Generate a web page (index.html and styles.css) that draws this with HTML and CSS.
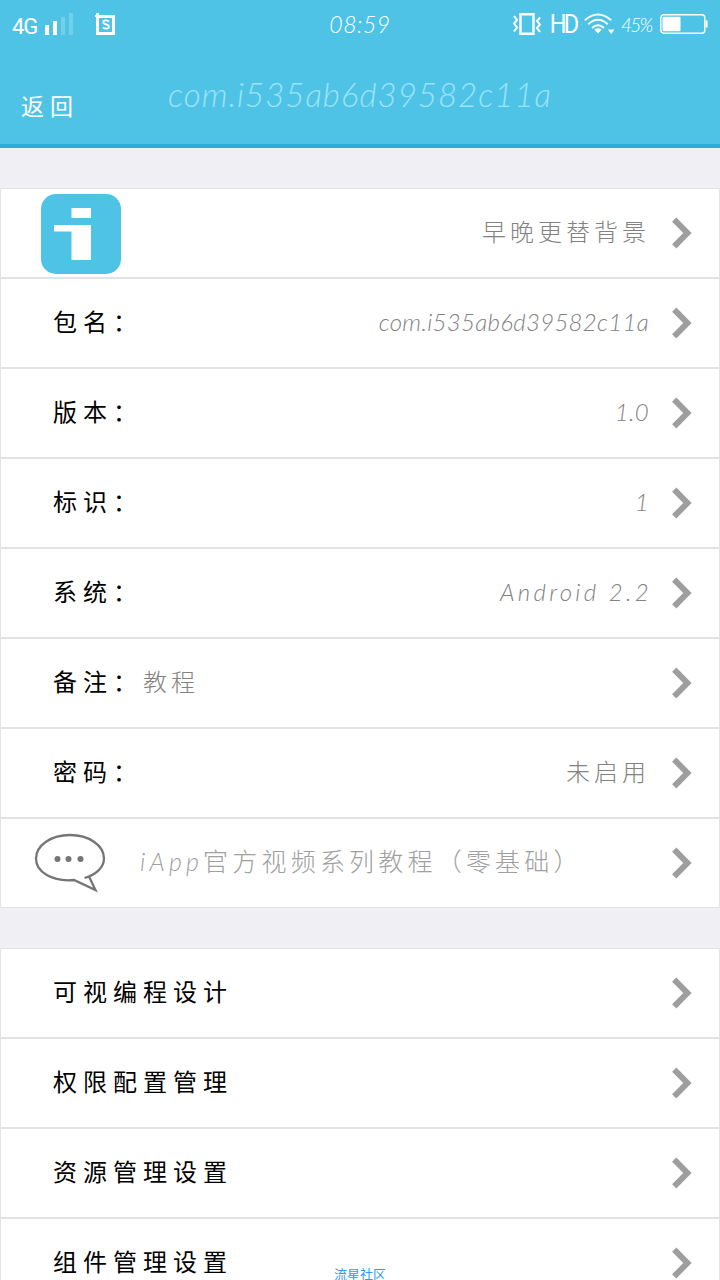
FILE: index.html
```html
<!DOCTYPE html>
<html lang="zh-CN">
<head>
    <meta charset="UTF-8">
    <meta name="viewport" content="width=device-width, initial-scale=1.0">
    <title>早晚更替背景</title>
    <link rel="stylesheet" href="styles.css">
</head>
<body>

    <!-- Shared icons -->
    <svg class="sprite" width="0" height="0">
        <symbol id="arrow" viewBox="0 0 22 34">
            <path d="M3.2 3.6 L16.4 17 L3.2 30.4" fill="none" stroke="#9e9e9e" stroke-width="6"/>
        </symbol>
    </svg>

    <header>
        <div class="status-bar">
            <div class="status-left">
                <span class="network">4G</span>
                <svg class="signal" width="28" height="22" viewBox="0 0 28 22">
                    <path d="M0 12h4v10h-4z M8 8h4v14h-4z" fill="#fff"/>
                    <path d="M16 4h4v18h-4z M24 0h4v22h-4z" fill="#72d0eb"/>
                </svg>
                <svg class="app-badge" width="20" height="22" viewBox="0 0 20 22">
                    <path d="M2.5 3.5h16v17h-16z" fill="none" stroke="#fff" stroke-width="3"/>
                    <path d="M0 2h1v-2h3v4h-4z" fill="#fff"/>
                    <path d="M13.9 8.6C12.5 6.8 8.3 7 8.3 9.2C8.3 12 13.9 10.9 13.9 13.8C13.9 16.2 9.1 16.2 7.9 14.3" fill="none" stroke="#fff" stroke-width="1.8"/>
                </svg>
            </div>
            <span class="clock">08:59</span>
            <div class="status-right">
                <svg class="vibrate" width="28" height="22" viewBox="0 0 28 22">
                    <path d="M7.5 1.2h13v19.6h-13z" fill="none" stroke="#fff" stroke-width="2.4"/>
                    <path d="M1 3l3 4l-3 3.5l3 4l-3 4 M27 4.5l-3 3.5l3 3.5l-3 3.5l3 4" fill="none" stroke="#fff" stroke-width="2"/>
                </svg>
                <span class="hd">HD</span>
                <svg class="wifi" width="31" height="22" viewBox="0 0 31 22">
                    <path d="M0.8 7.3Q14 -4.2 27.2 7.3 M4.3 11.2Q14 2.4 23.7 11.2 M8 15Q14 9.6 20 15" fill="none" stroke="#fff" stroke-width="2"/>
                    <path d="M10.3 16.6Q14 13.8 17.7 16.6L14 20.4z M24 16.5h6.4l-3.2 4.8z" fill="#fff"/>
                </svg>
                <span class="percent">45%</span>
                <svg class="battery" width="48" height="20" viewBox="0 0 48 20">
                    <rect x="0.8" y="0.8" width="44" height="18.4" rx="3" fill="none" stroke="#fff" stroke-width="1.4"/>
                    <rect x="2.5" y="2.8" width="18" height="14.4" rx="1" fill="#fff"/>
                    <path d="M45.4 6.5h2.2v7h-2.2z" fill="#fff"/>
                </svg>
            </div>
        </div>
        <div class="title-bar">
            <a class="back" href="#">返回</a>
            <h1>com.i535ab6d39582c11a</h1>
        </div>
    </header>

    <main>
        <!-- App info -->
        <ul class="list">
            <li>
                <svg class="app-icon" width="80" height="80" viewBox="0 0 80 80">
                    <rect width="80" height="80" rx="15" fill="#4fc3e6"/>
                    <path d="M30.5 14H50v10H30.5z M13 31H50v35H30.5V37.5H13z" fill="#fff"/>
                </svg>
                <span class="value">早晚更替背景</span>
                <svg class="arrow"><use href="#arrow"/></svg>
            </li>
            <li>
                <span class="label">包名：</span>
                <span class="value package">com.i535ab6d39582c11a</span>
                <svg class="arrow"><use href="#arrow"/></svg>
            </li>
            <li>
                <span class="label">版本：</span>
                <span class="value latin">1.0</span>
                <svg class="arrow"><use href="#arrow"/></svg>
            </li>
            <li>
                <span class="label">标识：</span>
                <span class="value latin">1</span>
                <svg class="arrow"><use href="#arrow"/></svg>
            </li>
            <li>
                <span class="label">系统：</span>
                <span class="value latin system">Android 2.2</span>
                <svg class="arrow"><use href="#arrow"/></svg>
            </li>
            <li>
                <span class="label">备注：</span>
                <span class="note">教程</span>
                <svg class="arrow"><use href="#arrow"/></svg>
            </li>
            <li>
                <span class="label">密码：</span>
                <span class="value">未启用</span>
                <svg class="arrow"><use href="#arrow"/></svg>
            </li>
            <li>
                <svg class="chat-icon" width="72" height="60" viewBox="0 0 72 60">
                    <path d="M50.5 45C62 41.8 70 34.5 70 25.5C70 12 54.5 2 36 2S2 12 2 25.5C2 39 18 49 40 47L61.5 57L55 43.5" fill="none" stroke="#757575" stroke-width="2.3"/>
                    <g fill="#757575"><circle cx="23.5" cy="26" r="3"/><circle cx="34.5" cy="26" r="3"/><circle cx="46.5" cy="26" r="3"/></g>
                </svg>
                <span class="video"><i>iApp</i>官方视频系列教程（零基础）</span>
                <svg class="arrow"><use href="#arrow"/></svg>
            </li>
        </ul>

        <!-- Settings -->
        <ul class="list">
            <li>
                <span class="label">可视编程设计</span>
                <svg class="arrow"><use href="#arrow"/></svg>
            </li>
            <li>
                <span class="label">权限配置管理</span>
                <svg class="arrow"><use href="#arrow"/></svg>
            </li>
            <li>
                <span class="label">资源管理设置</span>
                <svg class="arrow"><use href="#arrow"/></svg>
            </li>
            <li>
                <span class="label">组件管理设置</span>
                <svg class="arrow"><use href="#arrow"/></svg>
            </li>
        </ul>
    </main>

    <div class="watermark">流星社区</div>

</body>
</html>
```

FILE: styles.css
```css
/* General Styles */
* {
    box-sizing: border-box;
}

body {
    font-family: Lato, "Noto Sans CJK SC", sans-serif;
    margin: 0;
    height: 1280px;
    overflow: hidden;
    position: relative;
    background-color: #efeff4;
}

svg {
    flex: none;
}

.sprite {
    position: absolute;
}

/* Header */
header {
    height: 148px;
    background: #4fc3e6;
    border-bottom: 4px solid #29add6;
    color: white;
}

.status-bar {
    display: grid;
    grid-template-columns: 1fr auto 1fr;
    height: 48px;
    padding: 0 12px;
    align-items: center;
}

.status-left, .status-right {
    display: flex;
    align-items: center;
}

.status-right {
    justify-content: flex-end;
}

.network {
    width: 33px;
    font-family: Roboto, sans-serif;
    font-size: 22px;
    letter-spacing: -1px;
    padding-top: 5px;
}

.signal {
    margin-right: 22px;
}

.clock {
    font-size: 23px;
    font-style: italic;
    font-weight: 300;
    letter-spacing: 0.5px;
}

.hd {
    width: 43px;
    padding-left: 8px;
    font-family: Roboto, sans-serif;
    font-size: 25px;
    letter-spacing: -3px;
    transform: scaleX(0.94);
}

.wifi {
    margin-right: 6px;
}

.percent {
    width: 39px;
    font-size: 19px;
    font-style: italic;
    font-weight: 300;
    letter-spacing: -1.8px;
}

.battery {
    margin-right: 0;
}

.title-bar {
    display: grid;
    grid-template-columns: 120px 1fr 120px;
    height: 96px;
    align-items: center;
}

.back {
    color: white;
    font-size: 23px;
    letter-spacing: 6px;
    padding: 18px 0 0 21px;
    text-decoration: none;
}

h1 {
    margin: 0;
    padding-bottom: 4px;
    color: #9ce4fa;
    font-size: 33px;
    font-style: italic;
    font-weight: 300;
    letter-spacing: 1px;
    text-align: center;
    white-space: nowrap;
}

/* Lists */
.list {
    list-style: none;
    margin: 40px 0 0;
    padding: 0;
}

.list li {
    display: flex;
    align-items: center;
    height: 90px;
    padding-right: 26px;
    background: white;
    border: 1px solid #e3e3e3;
    white-space: nowrap;
}

.label, .value, .note, .video {
    padding-bottom: 6px;
}

.label {
    padding-left: 52px;
    color: #000;
    font-size: 24px;
    letter-spacing: 6px;
}

.value, .note {
    color: #828282;
    font-size: 24px;
    font-weight: 300;
    letter-spacing: 4px;
}

.value {
    margin-left: auto;
    margin-right: -1px;
}

.package, .latin {
    font-style: italic;
    letter-spacing: 0.3px;
    margin-right: 0;
    padding-bottom: 4px;
}

.system {
    letter-spacing: 3.3px;
    margin-right: -3px;
}

.arrow {
    width: 22px;
    height: 34px;
    margin-left: auto;
    margin-bottom: 1px;
}

.value + .arrow {
    margin-left: 22px;
}

.app-icon {
    margin-left: 40px;
    margin-top: 2px;
}

.chat-icon {
    margin-left: 33px;
}

.video {
    margin-left: 34px;
    color: #a0a0a0;
    font-size: 25px;
    font-weight: 300;
    letter-spacing: 4.2px;
}

.watermark {
    position: absolute;
    top: 1265px;
    left: 0;
    width: 100%;
    color: #2b9bf4;
    font-size: 13px;
    line-height: 19px;
    text-align: center;
}
```
